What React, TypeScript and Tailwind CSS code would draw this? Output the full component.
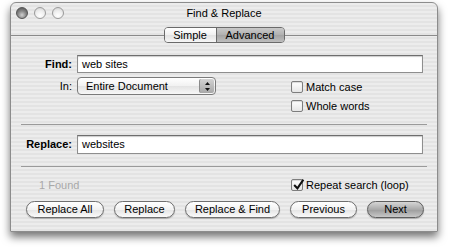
import React from 'react'

const font = { fontFamily: '"Liberation Sans", Arial, sans-serif' }

function Light({ dark }: { dark?: boolean }) {
  return (
    <div
      className={`w-[12px] h-[12px] rounded-full border ${
        dark
          ? 'border-[#555] bg-[radial-gradient(circle_at_50%_70%,#d0d0d0_0%,#8a8a8a_45%,#4a4a4a_100%)]'
          : 'border-[#9a9a9a] bg-[radial-gradient(circle_at_50%_75%,#ffffff_0%,#eeeeee_50%,#cfcfcf_100%)]'
      }`}
    />
  )
}

function Checkbox({ checked, label }: { checked?: boolean; label: string }) {
  return (
    <div className="flex items-center h-[12px]">
      <div className="relative w-[12px] h-[12px] rounded-[2px] border border-[#7d7d7d] bg-[linear-gradient(#ffffff,#e6e6e6)] shadow-[inset_0_1px_1px_rgba(0,0,0,0.15)]">
        {checked && (
          <svg viewBox="0 0 12 12" className="absolute -top-[2px] left-[0px] w-[13px] h-[13px]">
            <path d="M2 6.5 L5 9.5 L10.5 1.5" fill="none" stroke="#111" strokeWidth="1.9" />
          </svg>
        )}
      </div>
      <span className="ml-[3px] text-[11px] text-black leading-none">{label}</span>
    </div>
  )
}

function Button({ label, def, w }: { label: string; def?: boolean; w: string }) {
  return (
    <div
      className={`${w} h-[17px] rounded-full border flex items-center justify-center text-[11px] text-black leading-none ${
        def
          ? 'border-[#5e5e5e] bg-[linear-gradient(#d6d6d6,#a9a9a9_50%,#9c9c9c_51%,#c8c8c8)]'
          : 'border-[#6f6f6f] bg-[linear-gradient(#ffffff,#f2f2f2_50%,#e4e4e4_51%,#fafafa)]'
      } shadow-[0_1px_1px_rgba(0,0,0,0.25)]`}
    >
      {label}
    </div>
  )
}

function Field({ value, h }: { value: string; h: string }) {
  return (
    <div
      className={`flex-1 ${h} bg-white border border-[#8e8e8e] border-t-[#6e6e6e] shadow-[inset_0_1px_1px_rgba(0,0,0,0.2)] flex items-center pl-[4px] text-[11px] text-black`}
    >
      {value}
    </div>
  )
}

export default function App() {
  return (
    <div className="w-[450px] h-[251px] bg-white overflow-hidden" style={font}>
      <div className="ml-[10px] mt-[2px] w-[428px] h-[230px] rounded-t-[6px] border border-[#8c8c8c] bg-[repeating-linear-gradient(180deg,#ececec_0px,#ececec_2px,#e3e3e3_2px,#e3e3e3_4px)] shadow-[0_5px_9px_rgba(0,0,0,0.55)] flex flex-col">
        {/* title bar */}
        <div className="relative h-[20px] flex items-center">
          <div className="flex items-center gap-[6px] ml-[5px]">
            <Light dark />
            <Light />
            <Light />
          </div>
          <div className="absolute inset-0 flex items-center justify-center text-[11px] text-black">
            Find &amp; Replace
          </div>
        </div>

        {/* tabs */}
        <div className="flex items-center mt-[4px] h-[16px]">
          <div className="flex-1 h-px bg-[#8a8a8a]" />
          <div className="flex h-[16px] rounded-[4px] border border-[#6a6a6a] overflow-hidden text-[11px] leading-none">
            <div className="w-[52px] flex items-center justify-center bg-[linear-gradient(#ffffff,#f0f0f0_50%,#e2e2e2_51%,#f6f6f6)] border-r border-[#6a6a6a]">
              Simple
            </div>
            <div className="w-[67px] flex items-center justify-center bg-[linear-gradient(#c9c9c9,#b0b0b0_50%,#a3a3a3_51%,#bdbdbd)]">
              Advanced
            </div>
          </div>
          <div className="flex-1 h-px bg-[#8a8a8a]" />
        </div>

        {/* find */}
        <div className="flex items-center mt-[12px] pr-[14px]">
          <div className="w-[61px] text-right text-[11px] font-bold text-black">Find:</div>
          <div className="ml-[5px] flex-1 flex">
            <Field value="web sites" h="h-[18px]" />
          </div>
        </div>

        {/* in + options */}
        <div className="flex mt-[4px]">
          <div className="flex items-center h-[18px] self-start">
            <div className="w-[61px] text-right text-[11px] text-black">In:</div>
            <div className="ml-[5px] w-[139px] h-[18px] rounded-[4px] border border-[#7a7a7a] bg-[linear-gradient(#ffffff,#f1f1f1_50%,#e3e3e3_51%,#f7f7f7)] flex items-center text-[11px] text-black">
              <span className="pl-[8px] flex-1">Entire Document</span>
              <div className="w-[15px] h-[14px] mr-[1px] rounded-[2px] bg-[linear-gradient(#d2d2d2,#a8a8a8)] border-l border-[#8a8a8a] flex items-center justify-center">
                <svg viewBox="0 0 7 11" className="w-[7px] h-[11px]">
                  <path d="M3.5 1 L6 4 L1 4 Z" fill="#111" />
                  <path d="M3.5 10 L6 7 L1 7 Z" fill="#111" />
                </svg>
              </div>
            </div>
          </div>
          <div className="ml-[75px] mt-[4px] flex flex-col gap-[7px]">
            <Checkbox label="Match case" />
            <Checkbox label="Whole words" />
          </div>
        </div>

        <div className="mx-[10px] mt-[12px] h-px bg-[#9a9a9a]" />

        {/* replace */}
        <div className="flex items-center mt-[10px] pr-[14px]">
          <div className="w-[61px] text-right text-[11px] font-bold text-black">Replace:</div>
          <div className="ml-[5px] flex-1 flex">
            <Field value="websites" h="h-[19px]" />
          </div>
        </div>

        <div className="mx-[10px] mt-[12px] h-px bg-[#9a9a9a]" />

        {/* status */}
        <div className="flex items-center mt-[12px] h-[12px]">
          <div className="ml-[28px] w-[252px] text-[11px] text-[#a8a8a8]">1 Found</div>
          <Checkbox checked label="Repeat search (loop)" />
        </div>

        {/* buttons */}
        <div className="flex items-center gap-[10px] mt-[10px] ml-[15px]">
          <Button label="Replace All" w="w-[78px]" />
          <Button label="Replace" w="w-[61px]" />
          <Button label="Replace & Find" w="w-[95px]" />
          <Button label="Previous" w="w-[67px]" />
          <Button label="Next" def w="w-[57px]" />
        </div>
      </div>
    </div>
  )
}
